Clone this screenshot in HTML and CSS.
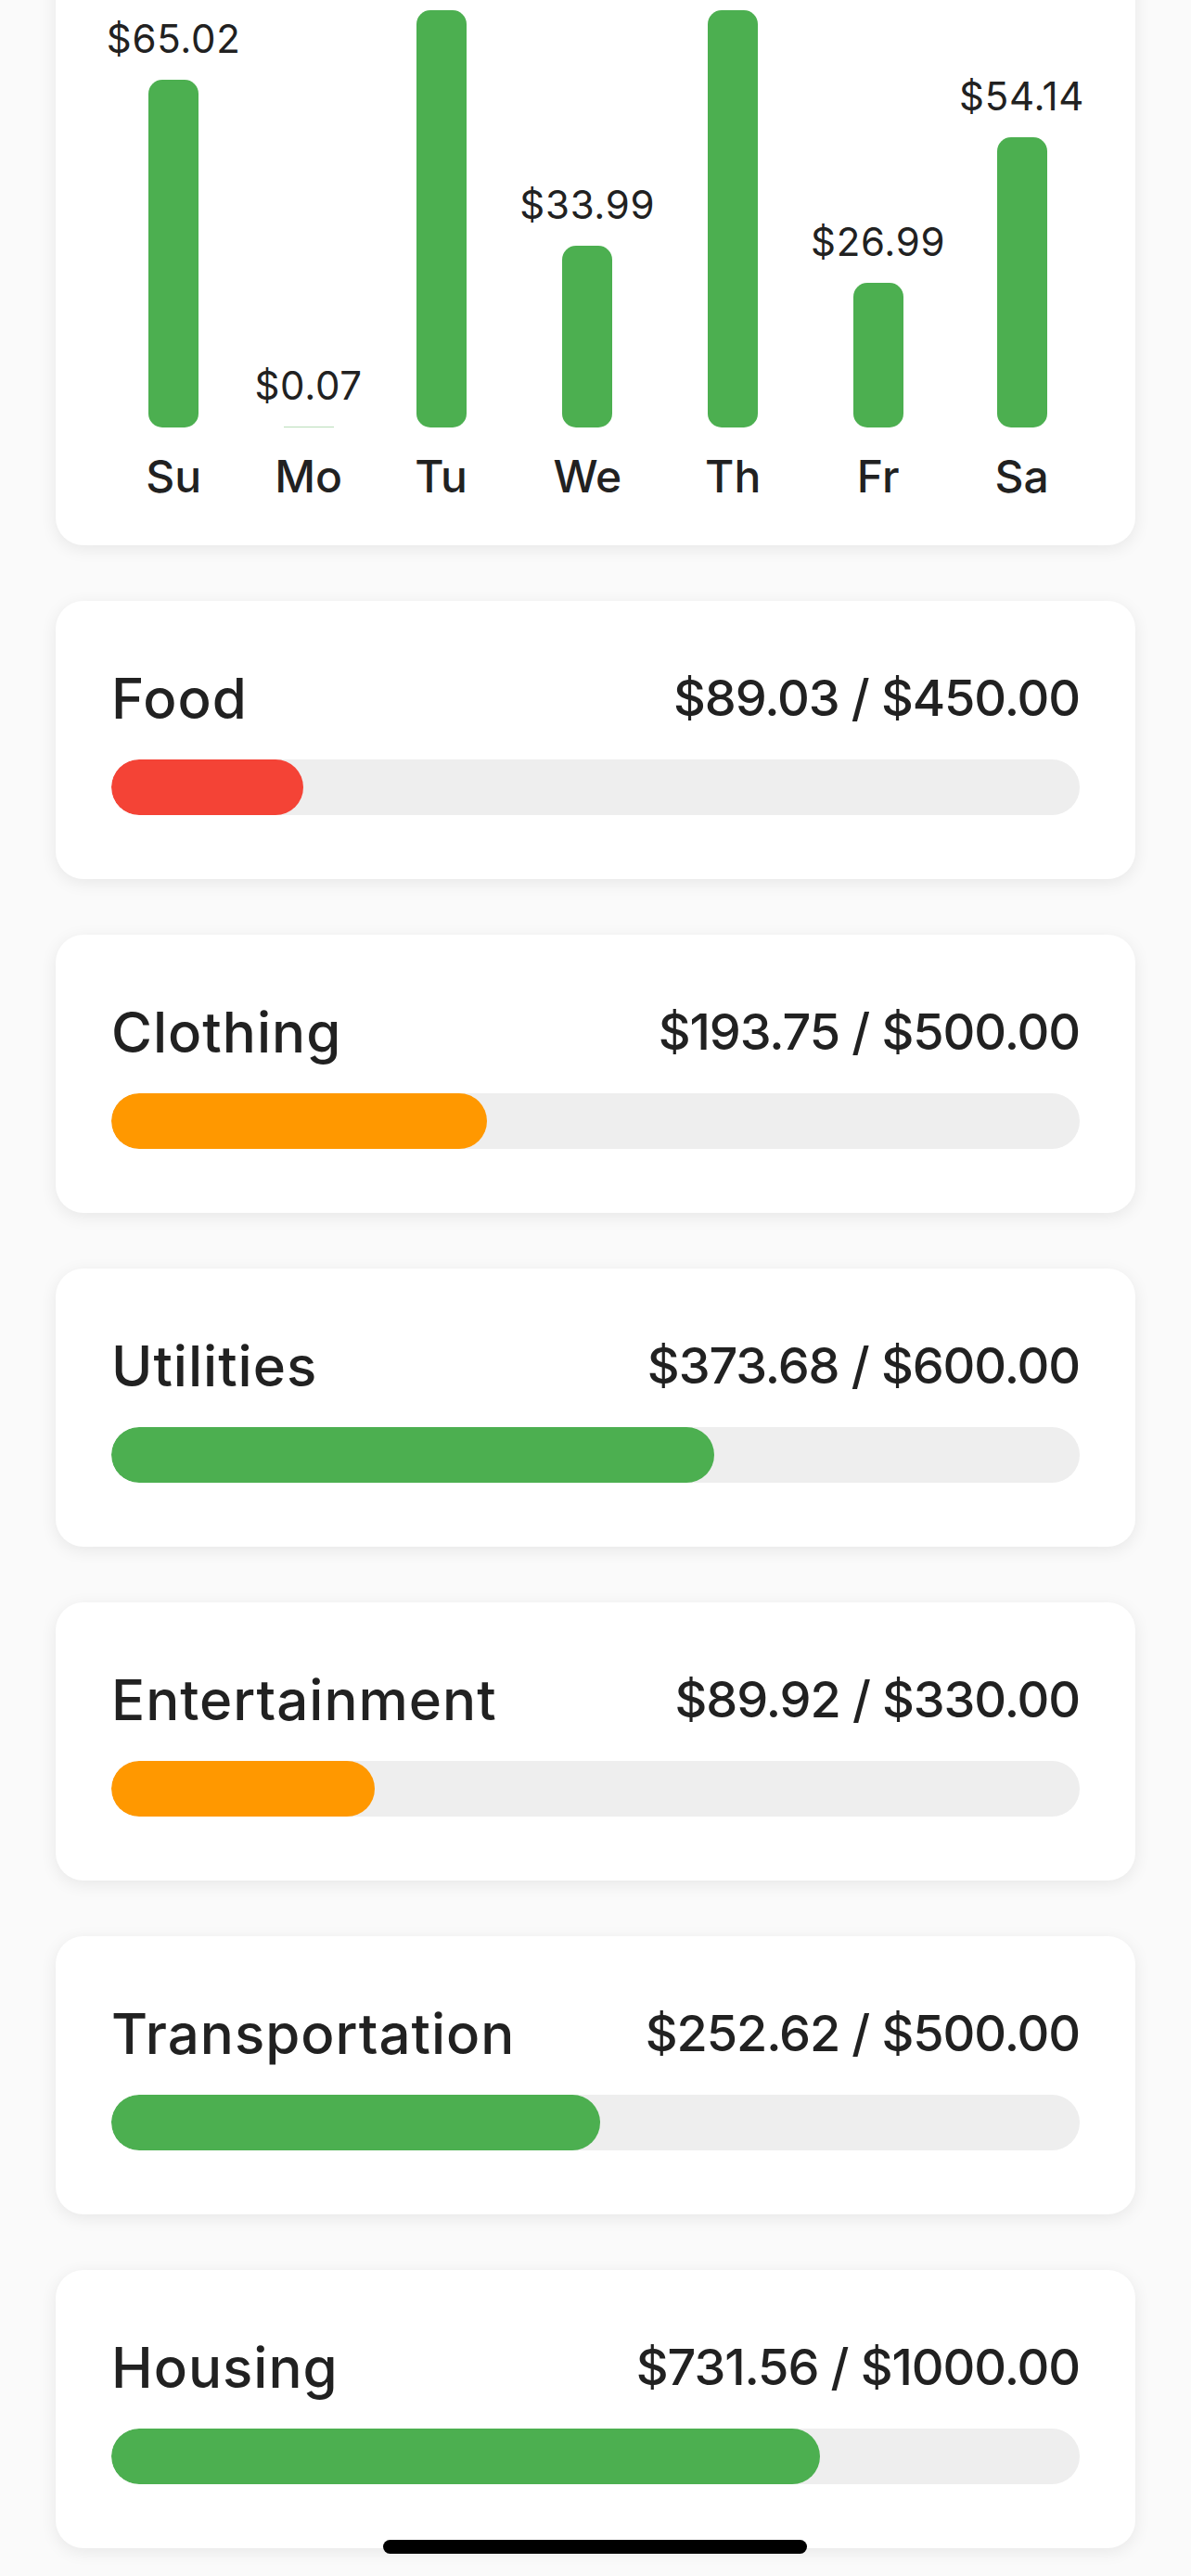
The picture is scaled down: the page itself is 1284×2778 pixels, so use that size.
FILE: index.html
```html
<!DOCTYPE html>
<html lang="en">
<head>
<meta charset="utf-8">
<title>Budget</title>
<link rel="stylesheet" href="styles.css">
</head>
<body>
<main class="screen">
  <section class="card chart-card">
    <div class="chart">
      <div class="col"><span class="amt">$65.02</span><div class="bar" style="height:375px"></div><span class="day">Su</span></div>
      <div class="col"><span class="amt">$0.07</span><div class="bar bar-min"></div><span class="day">Mo</span></div>
      <div class="col col-tu"><div class="bar" style="height:450px"></div><span class="day">Tu</span></div>
      <div class="col"><span class="amt">$33.99</span><div class="bar" style="height:196px"></div><span class="day">We</span></div>
      <div class="col col-th"><div class="bar" style="height:450px"></div><span class="day">Th</span></div>
      <div class="col"><span class="amt">$26.99</span><div class="bar" style="height:156px"></div><span class="day">Fr</span></div>
      <div class="col"><span class="amt">$54.14</span><div class="bar" style="height:313px"></div><span class="day">Sa</span></div>
    </div>
  </section>

  <section class="card budget">
    <div class="budget-head"><span class="name">Food</span><span class="spent">$89.03 / $450.00</span></div>
    <div class="track"><div class="fill red" style="width:19.78%"></div></div>
  </section>

  <section class="card budget">
    <div class="budget-head"><span class="name">Clothing</span><span class="spent">$193.75 / $500.00</span></div>
    <div class="track"><div class="fill orange" style="width:38.75%"></div></div>
  </section>

  <section class="card budget">
    <div class="budget-head"><span class="name">Utilities</span><span class="spent">$373.68 / $600.00</span></div>
    <div class="track"><div class="fill green" style="width:62.28%"></div></div>
  </section>

  <section class="card budget">
    <div class="budget-head"><span class="name">Entertainment</span><span class="spent">$89.92 / $330.00</span></div>
    <div class="track"><div class="fill orange" style="width:27.25%"></div></div>
  </section>

  <section class="card budget">
    <div class="budget-head"><span class="name">Transportation</span><span class="spent">$252.62 / $500.00</span></div>
    <div class="track"><div class="fill green" style="width:50.52%"></div></div>
  </section>

  <section class="card budget">
    <div class="budget-head"><span class="name">Housing</span><span class="spent">$731.56 / $1000.00</span></div>
    <div class="track"><div class="fill green" style="width:73.16%"></div></div>
  </section>
</main>
<div class="home-indicator"></div>
</body>
</html>
```
FILE: styles.css
```css
html, body {
  margin: 0;
  padding: 0;
  background: #fafafa;
}

body {
  font-family: Inter, "Noto Sans", Roboto, sans-serif;
  color: #212121;
  overflow: hidden;
  height: 2778px;
}

.screen {
  display: flex;
  flex-direction: column;
  gap: 60px;
  padding: 0 60px;
}

.card {
  background: #ffffff;
  border-radius: 30px;
  box-shadow: 0 4px 18px rgba(0, 0, 0, 0.08);
}

/* chart card */
.chart-card {
  margin-top: -77px;
  padding: 0 40px 45px;
}

.chart {
  height: 620px;
  display: flex;
  justify-content: space-evenly;
  align-items: flex-end;
}

.col {
  display: flex;
  flex-direction: column;
  align-items: center;
}

.col-tu { width: 140px; }
.col-th { width: 138px; }

.amt {
  font-size: 42px;
  line-height: 51px;
  font-weight: 400;
  letter-spacing: 0.7px;
  margin-bottom: 19px;
  white-space: nowrap;
}

.bar {
  width: 54px;
  background: #4caf50;
  border-radius: 15px;
}

.bar-min {
  height: 1px;
  border-radius: 0;
  background: #b9deb9;
}

.day {
  font-size: 48px;
  line-height: 58px;
  font-weight: 500;
  margin-top: 24px;
}

/* budget cards */
.budget {
  padding: 69px 60px;
  display: flex;
  flex-direction: column;
  gap: 30px;
}

.budget-head {
  display: flex;
  justify-content: space-between;
  align-items: center;
  height: 72px;
}

.name {
  font-size: 60px;
  line-height: 72px;
  font-weight: 500;
  letter-spacing: 1px;
}

.spent {
  font-size: 54px;
  line-height: 68px;
  font-weight: 500;
  letter-spacing: -1.1px;
  white-space: nowrap;
}

.track {
  height: 60px;
  border-radius: 30px;
  background: #eeeeee;
  overflow: hidden;
}

.fill {
  height: 100%;
  border-radius: 30px;
}

.red { background: #f44336; }
.orange { background: #ff9800; }
.green { background: #4caf50; }

.home-indicator {
  position: fixed;
  left: 413px;
  top: 2739px;
  width: 457px;
  height: 15px;
  border-radius: 8px;
  background: #000000;
}
```
